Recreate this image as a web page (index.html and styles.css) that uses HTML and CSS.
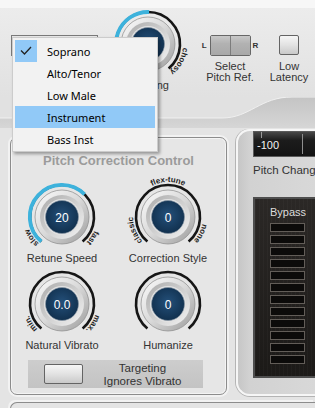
FILE: index.html
```html
<!DOCTYPE html>
<html lang="en">
<head>
    <meta charset="UTF-8">
    <meta name="viewport" content="width=device-width, initial-scale=1.0">
    <title>Pitch Correction</title>
    <link rel="stylesheet" href="styles.css">
</head>
<body>

    <div class="plugin">

        <!-- top strip -->
        <div class="top">
            <div class="combo"></div>

            <div class="tracking">
                <svg class="dial" viewBox="0 0 90 78" width="90" height="78">
                    <defs>
                        <linearGradient id="ringOuter" x1="0" y1="0" x2="1" y2="1">
                            <stop offset="0" stop-color="#fbfbfb"/>
                            <stop offset="0.5" stop-color="#d9d9d9"/>
                            <stop offset="1" stop-color="#9a9a9a"/>
                        </linearGradient>
                        <linearGradient id="ringInner" x1="0" y1="0" x2="1" y2="1">
                            <stop offset="0" stop-color="#ababab"/>
                            <stop offset="1" stop-color="#f4f4f4"/>
                        </linearGradient>
                        <radialGradient id="core" cx="0.5" cy="0.45" r="0.55">
                            <stop offset="0" stop-color="#24507a"/>
                            <stop offset="1" stop-color="#11304e"/>
                        </radialGradient>
                    </defs>
                    <path id="tp0" d="M45,77 A35,35 0 1,1 45,7 A35,35 0 1,1 45,77" fill="none"/>
                    <path class="arc" d="M24.4,66.5 A32,32 0 1,1 65.6,66.5"/>
                    <path class="arc-on" d="M24.4,66.5 A32,32 0 0,1 46.1,10"/>
                    <circle cx="45" cy="42" r="27" fill="url(#ringOuter)" stroke="#8a8a8a" stroke-width="0.7"/>
                    <circle cx="45" cy="42" r="22" fill="url(#ringInner)"/>
                    <circle cx="45" cy="42" r="18" fill="#e2e2e2"/>
                    <circle cx="45" cy="42" r="16.5" fill="url(#core)" stroke="#8c99a6" stroke-width="0.6"/>
                    <text class="lbl"><textPath href="#tp0" startOffset="83%" text-anchor="middle">choosy</textPath></text>
                </svg>
                <div class="cap">Tracking</div>
            </div>

            <div class="pitchref">
                <div class="switchrow">
                    <span class="lr">L</span>
                    <div class="switch"><span></span><span></span></div>
                    <span class="lr">R</span>
                </div>
                <div class="cap">Select<br>Pitch Ref.</div>
            </div>

            <div class="latency">
                <div class="toggle"></div>
                <div class="cap">Low<br>Latency</div>
            </div>
        </div>

        <svg class="band" viewBox="0 0 315 31" width="315" height="31">
            <defs>
                <linearGradient id="bandFill" x1="0" y1="0" x2="0" y2="1">
                    <stop offset="0" stop-color="#c4c4c4"/>
                    <stop offset="1" stop-color="#d6d6d6"/>
                </linearGradient>
            </defs>
            <path d="M0,21 H222 C250,21 260,0 292,0 H315 V31 H0 Z" fill="url(#bandFill)"/>
            <path d="M0,21 H222 C250,21 260,0 292,0 H315" fill="none" stroke="#f0f0f0" stroke-width="1"/>
        </svg>

        <div class="main">
            <section class="pcc">
                <h2 class="pcc-title">Pitch Correction Control</h2>

                <div class="knobs">
                    <div class="knob">
                        <svg class="dial" viewBox="0 0 90 78" width="90" height="78">
                            <path id="tp1" d="M45,77 A35,35 0 1,1 45,7 A35,35 0 1,1 45,77" fill="none"/>
                            <path class="arc" d="M24.4,66.5 A32,32 0 1,1 65.6,66.5"/>
                            <path class="arc-on" d="M24.4,66.5 A32,32 0 1,1 67.6,19.4"/>
                            <circle cx="45" cy="42" r="27" fill="url(#ringOuter)" stroke="#8a8a8a" stroke-width="0.7"/>
                            <circle cx="45" cy="42" r="22" fill="url(#ringInner)"/>
                            <circle cx="45" cy="42" r="18" fill="#e2e2e2"/>
                            <circle cx="45" cy="42" r="16.5" fill="url(#core)" stroke="#8c99a6" stroke-width="0.6"/>
                            <text class="lbl"><textPath href="#tp1" startOffset="15.5%" text-anchor="middle">slow</textPath></text>
                            <text class="lbl"><textPath href="#tp1" startOffset="84.5%" text-anchor="middle">fast</textPath></text>
                            <text class="val" x="45" y="46.5">20</text>
                        </svg>
                        <div class="cap">Retune Speed</div>
                    </div>

                    <div class="knob">
                        <svg class="dial" viewBox="0 0 90 78" width="90" height="78">
                            <path id="tp2" d="M45,77 A35,35 0 1,1 45,7 A35,35 0 1,1 45,77" fill="none"/>
                            <path class="arc" d="M24.4,66.5 A32,32 0 1,1 65.6,66.5"/>
                            <circle cx="45" cy="42" r="27" fill="url(#ringOuter)" stroke="#8a8a8a" stroke-width="0.7"/>
                            <circle cx="45" cy="42" r="22" fill="url(#ringInner)"/>
                            <circle cx="45" cy="42" r="18" fill="#e2e2e2"/>
                            <circle cx="45" cy="42" r="16.5" fill="url(#core)" stroke="#8c99a6" stroke-width="0.6"/>
                            <text class="lbl"><textPath href="#tp2" startOffset="19%" text-anchor="middle">classic</textPath></text>
                            <text class="lbl"><textPath href="#tp2" startOffset="50%" text-anchor="middle">flex-tune</textPath></text>
                            <text class="lbl"><textPath href="#tp2" startOffset="82.5%" text-anchor="middle">none</textPath></text>
                            <text class="val" x="45" y="46.5">0</text>
                        </svg>
                        <div class="cap">Correction Style</div>
                    </div>

                    <div class="knob">
                        <svg class="dial" viewBox="0 0 90 78" width="90" height="78">
                            <path id="tp3" d="M45,77 A35,35 0 1,1 45,7 A35,35 0 1,1 45,77" fill="none"/>
                            <path class="arc" d="M24.4,66.5 A32,32 0 1,1 65.6,66.5"/>
                            <circle cx="45" cy="42" r="27" fill="url(#ringOuter)" stroke="#8a8a8a" stroke-width="0.7"/>
                            <circle cx="45" cy="42" r="22" fill="url(#ringInner)"/>
                            <circle cx="45" cy="42" r="18" fill="#e2e2e2"/>
                            <circle cx="45" cy="42" r="16.5" fill="url(#core)" stroke="#8c99a6" stroke-width="0.6"/>
                            <text class="lbl"><textPath href="#tp3" startOffset="16%" text-anchor="middle">min.</textPath></text>
                            <text class="lbl"><textPath href="#tp3" startOffset="84%" text-anchor="middle">max.</textPath></text>
                            <text class="val" x="45" y="46.5">0.0</text>
                        </svg>
                        <div class="cap">Natural Vibrato</div>
                    </div>

                    <div class="knob">
                        <svg class="dial" viewBox="0 0 90 78" width="90" height="78">
                            <path class="arc" d="M24.4,66.5 A32,32 0 1,1 65.6,66.5"/>
                            <circle cx="45" cy="42" r="27" fill="url(#ringOuter)" stroke="#8a8a8a" stroke-width="0.7"/>
                            <circle cx="45" cy="42" r="22" fill="url(#ringInner)"/>
                            <circle cx="45" cy="42" r="18" fill="#e2e2e2"/>
                            <circle cx="45" cy="42" r="16.5" fill="url(#core)" stroke="#8c99a6" stroke-width="0.6"/>
                            <text class="val" x="45" y="46.5">0</text>
                        </svg>
                        <div class="cap">Humanize</div>
                    </div>
                </div>

                <div class="targeting">
                    <div class="toggle wide"></div>
                    <div class="targeting-text">Targeting<br>Ignores Vibrato</div>
                </div>
            </section>

            <aside class="side">
                <div class="meter"><span>-100</span></div>
                <div class="side-cap">Pitch Change</div>
                <div class="bypass">
                    <div class="bypass-title">Bypass</div>
                    <div class="leds">
                        <span class="led"></span><span class="led"></span><span class="led"></span>
                        <span class="led"></span><span class="led"></span><span class="led"></span>
                        <span class="led"></span><span class="led"></span><span class="led"></span>
                        <span class="led"></span><span class="led"></span><span class="led"></span>
                    </div>
                </div>
            </aside>
        </div>

        <div class="next"></div>

        <!-- open voice type dropdown -->
        <ul class="menu">
            <li><span class="mark">
                <svg width="22" height="22" viewBox="0 0 22 22"><path d="M6,10.5 L9.5,14 L16,7" fill="none" stroke="#222" stroke-width="1.3"/></svg>
            </span>Soprano</li>
            <li><span class="mark"></span>Alto/Tenor</li>
            <li><span class="mark"></span>Low Male</li>
            <li class="hover"><span class="mark"></span>Instrument</li>
            <li><span class="mark"></span>Bass Inst</li>
        </ul>

    </div>

</body>
</html>
```

FILE: styles.css
```css
/* Basic Reset */
* {
    margin: 0;
    padding: 0;
    box-sizing: border-box;
}

body {
    width: 315px;
    height: 408px;
    overflow: hidden;
    font-family: "Liberation Sans", Arial, sans-serif;
    color: #333;
}

.plugin {
    position: relative;
    width: 315px;
    height: 408px;
    overflow: hidden;
    background: #e4e4e4;
}

/* top strip */
.top {
    display: flex;
    align-items: flex-start;
    height: 97px;
    background: linear-gradient(#f7f7f7 0, #f7f7f7 8px, #ececec 8px, #e1e1e1 100%);
}

.combo {
    margin: 35px 0 0 11px;
    width: 87px;
    height: 21px;
    border: 1px solid #7a7a7a;
    background: #e9e9e9;
}

.tracking {
    display: flex;
    flex-direction: column;
    align-items: center;
    width: 90px;
    margin: 2px 0 0 5px;
}

.cap {
    font-size: 11px;
    line-height: 11px;
    text-align: center;
    color: #333;
    white-space: nowrap;
}

.pitchref {
    width: 60px;
    margin-left: 7px;
    display: flex;
    flex-direction: column;
    align-items: center;
}

.switchrow {
    display: flex;
    align-items: center;
    margin-top: 35px;
}

.lr {
    font-size: 8px;
    font-weight: bold;
    color: #333;
}

.switch {
    display: flex;
    width: 41px;
    height: 21px;
    margin: 0 2px 0 3px;
    border: 1px solid #676767;
    border-radius: 2px;
    overflow: hidden;
}

.switch span {
    flex: 1;
    background: linear-gradient(#c8c8c8, #b2b2b2 40%, #a8a8a8);
}

.switch span + span {
    border-left: 1px solid #7c7c7c;
}

.pitchref .cap,
.latency .cap {
    margin-top: 5px;
}

.latency {
    width: 50px;
    margin-left: 4px;
    display: flex;
    flex-direction: column;
    align-items: center;
}

.toggle {
    width: 20px;
    height: 20px;
    margin-top: 35px;
    border: 1px solid #646464;
    border-radius: 2px;
    background: linear-gradient(#f6f6f6, #e2e2e2 50%, #c9c9c9);
}

.latency .cap {
    margin-top: 6px;
}

.band {
    display: block;
    background: #e1e1e1;
}

/* main area */
.main {
    display: flex;
    height: 268px;
}

.pcc {
    margin: 9px 0 0 10px;
    width: 217px;
    height: 258px;
    border: 1.5px solid #8c8c8c;
    border-radius: 7px;
    background: #e6e6e6;
    box-shadow: 0 0 0 2px #f2f2f2, inset 0 0 0 1px #f4f4f4;
}

.pcc-title {
    margin-top: 15px;
    font-size: 13px;
    line-height: 15px;
    font-weight: bold;
    text-align: center;
    color: #9b9b9b;
}

.knobs {
    display: grid;
    grid-template-columns: 102px 110px;
    margin-top: 7px;
}

.knob {
    display: flex;
    flex-direction: column;
    align-items: center;
}

.knob:nth-child(n+3) {
    margin-top: -2px;
}

.dial {
    display: block;
    overflow: visible;
}

.arc {
    fill: none;
    stroke: #161616;
    stroke-width: 2.6;
}

.arc-on {
    fill: none;
    stroke: #3db2dc;
    stroke-width: 3.8;
}

.lbl {
    font-family: "Liberation Sans", Arial, sans-serif;
    font-size: 8px;
    font-weight: bold;
    fill: #1e1e1e;
}

.val {
    font-family: "Liberation Sans", Arial, sans-serif;
    font-size: 12px;
    fill: #fff;
    text-anchor: middle;
}

.targeting {
    display: flex;
    align-items: flex-start;
    width: 175px;
    height: 28px;
    margin: 9px 0 0 16.5px;
    background: linear-gradient(#cdcdcd, #c3c3c3);
}

.toggle.wide {
    width: 39px;
    margin: 4px 0 0 16px;
}

.targeting-text {
    flex: 1;
    margin-top: 2px;
    font-size: 11.5px;
    line-height: 12.5px;
    text-align: center;
    color: #333;
}

/* right side */
.side {
    margin: 1px 0 0 auto;
    width: 79px;
    height: 267px;
    padding: 0 0 0 15px;
    border: 2px solid #f6f6f6;
    border-right: none;
    border-radius: 14px 0 0 14px;
    background: linear-gradient(90deg, #c6c6c6, #d2d2d2 12px, #d8d8d8);
    box-shadow: -1px 0 0 #b4b4b4, 0 1px 0 #b4b4b4;
}

.meter {
    position: relative;
    height: 26px;
    padding: 7px 0 0 3px;
    border: 1px solid #5a5a5a;
    border-right: none;
    background: linear-gradient(#474747, #1c1c1c 35%, #131313);
    color: #f2f2f2;
    font-size: 11px;
    line-height: 12px;
}

.meter::before {
    content: "";
    position: absolute;
    left: 7px;
    top: 0;
    height: 6px;
    border-left: 1px solid #9a9a9a;
}

.meter::after {
    content: "";
    position: absolute;
    left: 48px;
    top: 2px;
    height: 20px;
    border-left: 1px solid #8e8e8e;
}

.side-cap {
    margin-top: 6px;
    font-size: 11.5px;
    line-height: 14px;
    color: #333;
    white-space: nowrap;
}

.bypass {
    margin-top: 19.5px;
    height: 181.5px;
    padding-top: 7.5px;
    border: 2px solid #4e4e4e;
    border-right: none;
    background:
        repeating-linear-gradient(90deg, rgba(255, 255, 255, 0.025) 0 1px, transparent 1px 4px),
        linear-gradient(#2b2826, #1c1a18);
}

.bypass-title {
    padding-left: 6px;
    text-align: center;
    font-size: 11px;
    line-height: 12px;
    color: #dcdcdc;
}

.leds {
    display: flex;
    flex-direction: column;
    gap: 3px;
    margin: 5px 0 0 15px;
}

.led {
    width: 35px;
    height: 9px;
    border: 1px solid #625d58;
    background: #0c0b0a;
}

.next {
    margin: 6px 0 0 10px;
    height: 20px;
    border-top: 1.5px solid #8c8c8c;
    border-left: 1.5px solid #8c8c8c;
    border-top-left-radius: 7px;
    box-shadow: -2px -2px 0 #f2f2f2;
}

/* dropdown */
.menu {
    position: absolute;
    left: 12px;
    top: 37px;
    width: 146px;
    height: 115px;
    padding: 2px;
    list-style: none;
    background: #f2f2f2;
    border: 1px solid #cccccc;
    box-shadow: 2px 2px 3px rgba(0, 0, 0, 0.35);
    font-family: "Noto Sans", sans-serif;
    font-size: 11px;
    color: #000;
}

.menu li {
    display: flex;
    align-items: center;
    height: 22px;
}

.menu li.hover {
    background: #91c9f7;
}

.mark {
    width: 22px;
    height: 22px;
    margin-right: 10px;
}

.menu li:first-child .mark {
    background: #91c9f7;
}

.mark svg {
    display: block;
}
```
